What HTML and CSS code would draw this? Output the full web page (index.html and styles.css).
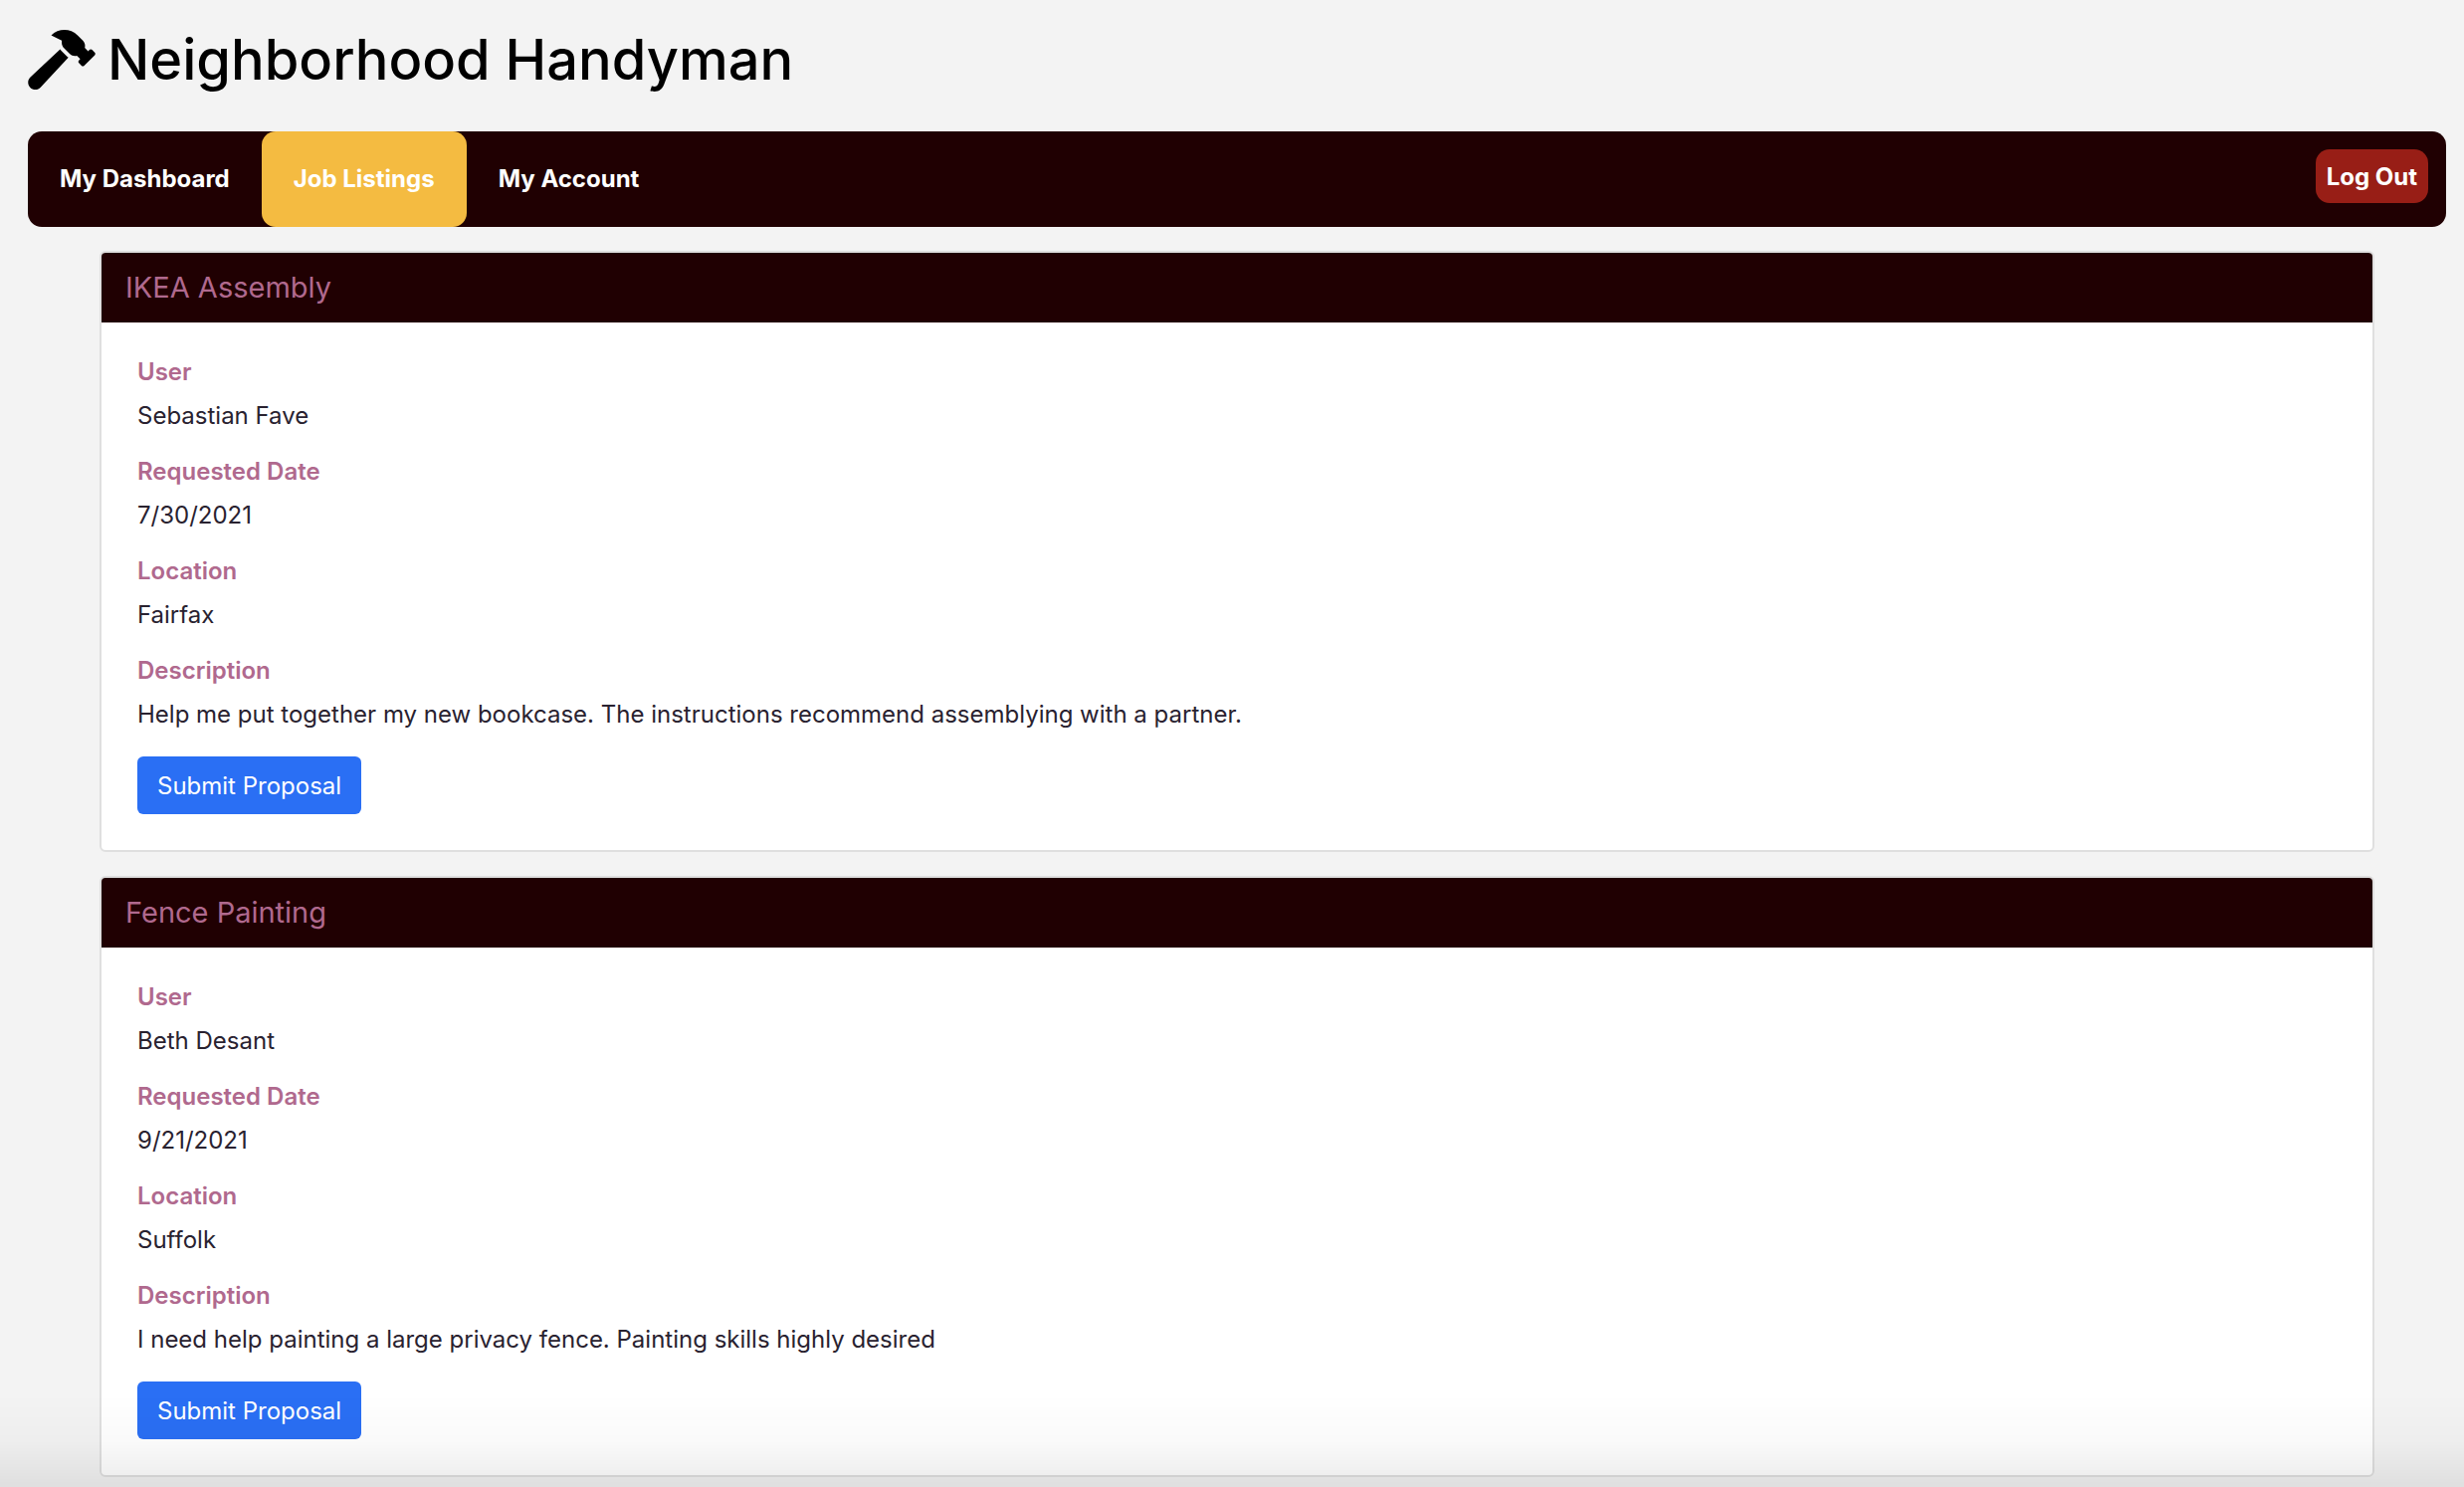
FILE: index.html
```html
<!DOCTYPE html>
<html lang="en">
<head>
  <meta charset="utf-8">
  <meta name="viewport" content="width=device-width, initial-scale=1">
  <title>Neighborhood Handyman</title>
  <link rel="stylesheet" href="styles.css">
</head>
<body>
  <header class="brand">
    <svg class="brand-icon" viewBox="0 0 576 512" aria-hidden="true"><path d="M571.31 193.94l-22.63-22.63c-6.25-6.25-16.38-6.25-22.63 0l-11.31 11.31-28.9-28.9c5.63-21.31.36-44.9-16.35-61.61l-45.25-45.25c-62.48-62.48-163.79-62.48-226.28 0l90.51 45.25v18.75c0 16.97 6.74 33.25 18.75 45.25l49.14 49.14c16.71 16.71 40.3 21.98 61.61 16.35l28.9 28.9-11.31 11.31c-6.25 6.25-6.25 16.38 0 22.63l22.63 22.63c6.25 6.25 16.38 6.25 22.63 0l90.51-90.51c6.23-6.24 6.23-16.37-.02-22.62zm-286.72-15.2c-3.7-3.7-6.84-7.79-9.85-11.95L19.64 404.96c-25.57 23.88-26.26 64.19-1.53 88.93s65.05 24.05 88.92-1.53l238.13-255.07c-3.96-2.91-7.9-5.87-11.44-9.41l-49.14-49.14z"/></svg>
    <h1 class="brand-name">Neighborhood Handyman</h1>
  </header>

  <nav class="navbar">
    <a class="nav-link" href="#dashboard">My Dashboard</a>
    <a class="nav-link active" href="#jobs" aria-current="page">Job Listings</a>
    <a class="nav-link" href="#account">My Account</a>
    <button class="logout" type="button">Log Out</button>
  </nav>

  <main class="listings">
    <article class="card">
      <h2 class="card-header">IKEA Assembly</h2>
      <div class="card-body">
        <dl class="details">
          <div><dt>User</dt><dd>Sebastian Fave</dd></div>
          <div><dt>Requested Date</dt><dd>7/30/2021</dd></div>
          <div><dt>Location</dt><dd>Fairfax</dd></div>
          <div><dt>Description</dt><dd>Help me put together my new bookcase. The instructions recommend assemblying with a partner.</dd></div>
        </dl>
        <button class="submit" type="button">Submit Proposal</button>
      </div>
    </article>

    <article class="card">
      <h2 class="card-header">Fence Painting</h2>
      <div class="card-body">
        <dl class="details">
          <div><dt>User</dt><dd>Beth Desant</dd></div>
          <div><dt>Requested Date</dt><dd>9/21/2021</dd></div>
          <div><dt>Location</dt><dd>Suffolk</dd></div>
          <div><dt>Description</dt><dd>I need help painting a large privacy fence. Painting skills highly desired</dd></div>
        </dl>
        <button class="submit" type="button">Submit Proposal</button>
      </div>
    </article>
  </main>
  <div class="bottom-shade"></div>
</body>
</html>
```
FILE: styles.css
```css
* {
  box-sizing: border-box;
}

body {
  margin: 0;
  padding: 0 18px 10px 28px;
  background: #f3f3f3;
  color: #292230;
  font-family: Inter, "Liberation Sans", sans-serif;
  font-size: 24px;
  line-height: 36px;
}

button {
  border: 0;
  font: inherit;
  color: #fff;
  cursor: pointer;
}

.brand {
  display: flex;
  align-items: center;
  gap: 12px;
  height: 132px;
  padding-bottom: 12px;
  color: #000;
}

.brand-icon {
  width: 68px;
  height: 60px;
  fill: currentColor;
}

.brand-name {
  margin: 0;
  font-size: 56px;
  font-weight: 500;
  line-height: 72px;
}

.navbar {
  display: flex;
  height: 96px;
  padding-right: 18px;
  border-radius: 14px;
  background: #200002;
}

.nav-link {
  padding: 30px 32px;
  border-radius: 14px;
  color: #fff;
  font-weight: 700;
  text-decoration: none;
}

.nav-link.active {
  background: #f4bb41;
}

.logout {
  margin: 18px 0 0 auto;
  height: 54px;
  padding: 2px 11px 0;
  border-radius: 14px;
  background: #981e16;
  font-weight: 700;
}

.listings {
  display: flex;
  flex-direction: column;
  gap: 24px;
  padding: 24px 72px 0;
}

.card {
  border: 2px solid #dfdfdf;
  border-radius: 6px;
  background: #fff;
  overflow: hidden;
}

.card-header {
  margin: 0;
  padding: 17px 24px;
  background: #200002;
  color: #b0698e;
  font-size: 29px;
  font-weight: 400;
  line-height: 36px;
}

.card-body {
  padding: 32px 36px 36px;
}

.details {
  display: flex;
  flex-direction: column;
  gap: 20px;
  margin: 0 0 24px;
}

.details dt {
  margin-bottom: 8px;
  color: #b0698e;
  font-weight: 600;
}

.details dd {
  margin: 0;
}

.submit {
  display: block;
  height: 58px;
  padding: 2px 20px 0;
  border-radius: 6px;
  background: #2a6ff4;
}

.bottom-shade {
  position: fixed;
  inset: auto 0 0;
  height: 94px;
  background: linear-gradient(rgb(0 0 0 / 0%), rgb(0 0 0 / 2%) 50%, rgb(0 0 0 / 8%));
  pointer-events: none;
}
```
